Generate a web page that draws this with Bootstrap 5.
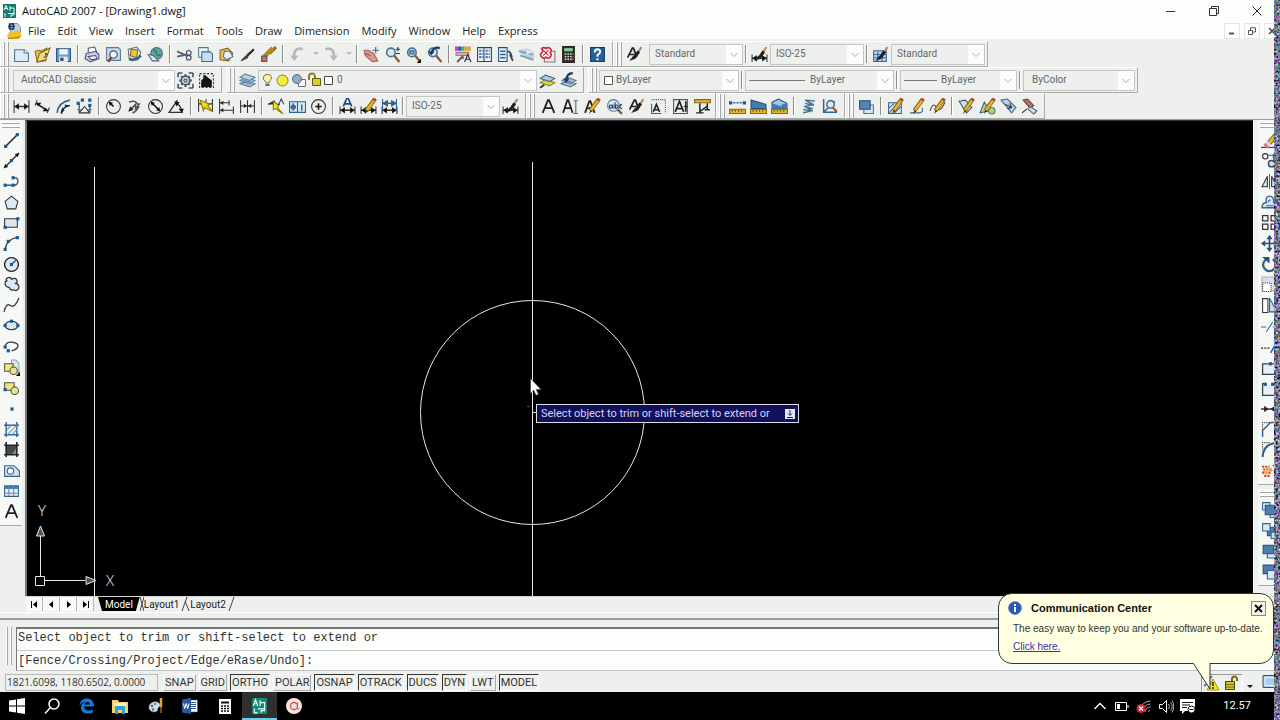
<!DOCTYPE html>
<html lang="en">
<head>
<meta charset="utf-8">
<meta name="viewport" content="width=device-width, initial-scale=1">
<title>AutoCAD 2007 - [Drawing1.dwg]</title>
<link href="https://cdn.jsdelivr.net/npm/bootstrap@5.3.0/dist/css/bootstrap.min.css" rel="stylesheet">
<style>
:root{--face:#eef0ee;--edge:#a9aba9;--ui:"Open Sans","Noto Sans",sans-serif;--small:Roboto,"Liberation Sans",sans-serif}
body{font-family:var(--ui);font-size:11px;line-height:14px;color:#222;background:var(--face);overflow:hidden}
button{padding:0;border:0;background:none;color:inherit;font:inherit;line-height:inherit}
svg{display:block;flex:none;fill:none;stroke-linecap:butt}
.titlebar{height:22px;background:#fcfefc;padding-left:3px}
.title-text{margin-left:6px;color:#111}
.win-btns{margin-right:2px}
.win-btn{width:43px;height:22px;display:flex;align-items:center;justify-content:center}
.menubar{height:17px;background:#fcfefc;padding-left:7px}
.menu-items{gap:12px;padding-left:6px}
.menubar a{color:#222;text-decoration:none}
.mdi button{width:16px;height:16px;background:#fff;border:1px solid #e4e6e4;display:flex;align-items:center;justify-content:center}
.bars{padding-top:2px;border-bottom:1px solid #9a9c9a}
.bar-row{height:26px}
.bar{display:flex;align-items:center;height:26px;border:1px solid;border-color:#fff var(--edge) var(--edge) #fff;padding-right:4px}
.bar-flush{padding-right:2px}
.grip{width:10px;height:24px;flex:none;background:linear-gradient(90deg,transparent 2px,#fff 2px 3px,#a5a7a5 3px 4px,transparent 4px 6px,#fff 6px 7px,#a5a7a5 7px 8px,transparent 8px)}
.tools{display:flex;align-items:center}
.tool{width:21px;height:22px;display:flex;align-items:center;justify-content:center;flex:none}
.tools-roomy .tool{width:22px}
.drop{width:12px;height:22px;display:flex;align-items:center;justify-content:flex-end}
.split{width:8px;height:18px;flex:none;background:linear-gradient(90deg,transparent 3px,#8c8e8c 3px 4px,#fff 4px 5px,transparent 5px)}
.split-thin{width:6px;height:18px;flex:none;background:linear-gradient(90deg,transparent 2px,#8c8e8c 2px 3px,#fff 3px 4px,transparent 4px)}
.combo{appearance:none;height:21px;border:1px solid #c4c6c4;border-radius:0;padding:0 20px 0 5px;font:10px/18px var(--small);color:#666!important;opacity:1;
 background:url("data:image/svg+xml,%3Csvg xmlns='http://www.w3.org/2000/svg' width='16' height='19'%3E%3Crect width='16' height='19' fill='%23fcfcfc'/%3E%3Cpath d='M4.500 8l3.500 3.500 3.500-3.500' fill='none' stroke='%23aaa'/%3E%3C/svg%3E") right center no-repeat #eef0ee}
.combo-wrap{position:relative;display:flex}
.combo-wrap svg{position:absolute;left:4px;top:2px;pointer-events:none}
.w-style{width:94px}.w-space{width:162px;margin-left:2px;padding-left:7px}.w-layer{width:279px;padding-left:78px}
.w-color{width:140px;padding-left:16px}.w-ltype{width:149px;padding-left:64px}.w-weight{width:117px;padding-left:40px}.w-plot{width:112px;padding-left:8px}
.workspace{min-height:0}
.side{width:25px;flex:none;background:var(--face);padding-right:3px}
.side-bar{background:#f6f8f6;border-bottom:1px solid var(--edge);padding-bottom:3px}
.side .tools{flex-direction:column}
.side .tool{flex:1 1 0;width:22px;min-height:0}
.grip-h{height:10px;margin:0 2px;background:linear-gradient(transparent 2px,#fff 2px 3px,#a5a7a5 3px 4px,transparent 4px 6px,#fff 6px 7px,#a5a7a5 7px 8px,transparent 8px)}
.draw-tools{height:392px}.modify-tools{height:351px}.order-tools{height:83px}
.right-side{width:27px;border-left:1px solid #fff;padding:0 0 0 4px}
.canvas{background:#000;border-left:2px solid #777;border-top:1px solid #333;position:relative;min-height:0}
.canvas>.scene{position:absolute;inset:0;width:100%;height:100%}
.prompt{position:absolute;left:509px;top:283px;width:263px;height:19px;background:#120f5c;border:1px solid #ddd;color:#d4d4f2;font:11px/16px var(--small);padding-left:4px;padding-right:3px}
.pointer{position:absolute;left:503px;top:257px}
.tabs{height:15px;margin-left:26px;line-height:13px;border-top:1px solid #d2d4d2}
.tab-nav{width:17px;height:14px;border-right:1px solid #b5b7b5;display:flex;align-items:center;justify-content:center;background:#f8faf8}
.layout-tab{font:10px/13px var(--small);color:#222}
.model-tab{background:#000;color:#fff;padding:0 7px;height:14px;clip-path:polygon(0 0,100% 0,calc(100% - 4px) 100%,4px 100%)}
.splitter{height:8px;border-top:1px solid #fff;border-bottom:2px solid #9a9c9a;margin-top:1px}
.command{padding:7px 0 1px 6px}
.command .grip{height:38px;width:10px;background-position:-2px 0}
.command-box{background:#fcfefc;border-top:2px solid #777;border-left:1px solid #777;border-bottom:1px solid #c0c2c0;font:12px/20px "Liberation Mono",monospace;color:#333}
.history{height:22px;border-bottom:1px solid #c8cac8;padding-left:1px;line-height:18px}
.command-input{border:0;outline:0;background:transparent;font:inherit;color:inherit;height:19px;padding:0 0 0 1px;width:100%;display:block}
.status{height:20px;padding:1px 0 0 5px;font:11px/15px var(--small);color:#333}
.coords{width:153px;height:17px;border:1px solid #b8bab8;font:10px/15px var(--ui);padding-left:1px;margin-right:5px}
.toggle{height:17px;padding:0 1px;border:1px solid;border-color:#fff #a9aba9 #a9aba9 #fff;margin-right:3px}
.toggle.active{border-color:#333 #fff #fff #333}
.tray-box{border:1px solid;border-color:#999 #fff #fff #999;height:18px;width:42px}
.clean-screen{margin-left:8px}
.taskbar{height:28px;background:#000;color:#fff}
.apps{width:311px}
.app{flex:1 1 0;height:28px;display:flex;align-items:center;justify-content:center}
.app-open{background:#30302f;box-shadow:inset 0 -2px #62d0ee}
.systray{padding-right:29px}
.systray button{width:22px;height:28px;display:flex;align-items:center;justify-content:center}
.systray time{margin-left:24px;font-family:var(--small)}
.balloon{position:absolute;right:6px;bottom:56px;width:276px;height:71px;background:#ffffe1;border:1px solid #333;border-radius:14px;padding:7px 7px 0 9px;color:#333;font:10px/15px "Liberation Sans",sans-serif}
.balloon h2{font:bold 11px/14px "Liberation Sans",sans-serif;color:#111;margin:0 0 0 9px}
.balloon p{margin:5px 0 3px 5px;white-space:nowrap;line-height:15px}
.balloon a{margin-left:5px;color:#3a2fc0}
.balloon .dismiss{width:15px;height:15px;border:1px solid #888;background:#f4f4ec}
.balloon-tail{position:absolute;left:193px;top:69px}
.edge-noise{position:absolute;right:0;top:0;width:6px;height:100%}
</style>
</head>
<body class="vh-100 d-flex flex-column position-relative">

<header>
 <div class="titlebar d-flex align-items-center">
  <svg width="13" height="14" viewBox="0 0 13 14"><path d="M0 0h13v14H0z" fill="#157a6e"/><path d="M1 6L3 1.500 5 6M2 4.500h2M7 2v5M5 9.500h6M7 4h4v7h-3v2M2 9v4" stroke="#e9fffa"/></svg>
  <span class="title-text">AutoCAD 2007 - [Drawing1.dwg]</span>
  <div class="win-btns ms-auto d-flex">
   <button class="win-btn" aria-label="Minimize"><svg width="10" height="10"><path d="M0 5.500h9" stroke="#333"/></svg></button>
   <button class="win-btn" aria-label="Restore"><svg width="10" height="10"><path d="M.5 2.500h7v7h-7zM2.500 2.500v-2h7v7h-2" stroke="#333"/></svg></button>
   <button class="win-btn" aria-label="Close"><svg width="10" height="10"><path d="M.5.5l9 9M9.500.5l-9 9" stroke="#222"/></svg></button>
  </div>
 </div>
 <nav class="menubar d-flex align-items-center" aria-label="Menu">
  <svg width="15" height="16" viewBox="0 0 15 16"><path d="M3.500.5h7l3 4v9h-10z" fill="#b9d4ee" stroke="#7d95b5"/><path d="M0 13l3-5q5 2 7-1l4 2v5l-2 2H1z" fill="#efbf2f"/><path d="M1 15.500l11-1 2-2" stroke="#a77a12"/><path d="M2.500 1h4v5h-4zM1 3.500h7" stroke="#1b3560" stroke-width="1.500"/></svg>
  <div class="menu-items d-flex">
   <a href="#">File</a><a href="#">Edit</a><a href="#">View</a><a href="#">Insert</a><a href="#">Format</a><a href="#">Tools</a><a href="#">Draw</a><a href="#">Dimension</a><a href="#">Modify</a><a href="#">Window</a><a href="#">Help</a><a href="#">Express</a>
  </div>
  <div class="mdi d-flex gap-1 ms-auto">
   <button aria-label="Minimize drawing"><svg width="8" height="8"><path d="M1 6.500h5" stroke="#556" stroke-width="2"/></svg></button>
   <button aria-label="Restore drawing"><svg width="8" height="8"><path d="M.5 3.500h4v4h-4zM2.500 3V.8h5V5H5" stroke="#556"/></svg></button>
   <button aria-label="Close drawing"><svg width="8" height="8"><path d="M1 1l6 6M7 1L1 7" stroke="#456" stroke-width="1.600"/></svg></button>
  </div>
 </nav>
</header>

<section class="bars" aria-label="Toolbars">
 <div class="bar-row d-flex">
  <div class="bar"><span class="grip"></span><div class="tools" data-tools="new open save | print preview publish dwf | cut copy paste match block | undo v redo v | pan zoomrt zoomwin zoomprev | props design palettes sheets markup calc | help"></div></div>
  <div class="bar bar-flush"><span class="grip"></span>
   <div class="tools" data-tools="textstyle"></div><select class="combo w-style ms-1" disabled aria-label="Text style"><option>Standard</option></select><span class="split-thin"></span>
   <div class="tools" data-tools="dimstyle"></div><select class="combo w-style" disabled aria-label="Dimension style"><option>ISO-25</option></select><span class="split-thin"></span>
   <div class="tools" data-tools="tablestyle"></div><select class="combo w-style" disabled aria-label="Table style"><option>Standard</option></select></div>
 </div>
 <div class="bar-row d-flex gap-1">
  <div class="bar"><span class="grip"></span><select class="combo w-space" disabled aria-label="Workspace"><option>AutoCAD Classic</option></select><div class="tools" data-tools="gear myspace"></div></div>
  <div class="bar"><span class="grip"></span><div class="tools" data-tools="layers"></div>
   <div class="combo-wrap"><select class="combo w-layer" disabled aria-label="Layer"><option>0</option></select>
    <svg width="74" height="17" viewBox="0 0 74 17"><path d="M5 2.500a3.500 3.500 0 0 1 2.500 6.500L7 11H4L3 9A3.500 3.500 0 0 1 5 2.500z" fill="#fbf39a" stroke="#776"/><path d="M3.500 13h4" stroke="#667" stroke-width="2"/><circle cx="20.500" cy="8.500" r="5.500" fill="#f4ec38" stroke="#776"/><path d="M36.500 7.500h7v7h-7z" fill="#fff" stroke="#678"/><circle cx="35" cy="7" r="4.500" fill="#8eabc7" stroke="#567"/><path d="M47 8V4.500a3 3 0 0 1 6 0V6" stroke="#8b8022" stroke-width="2"/><path d="M50.500 6.500h8v7h-8z" fill="#d9ce2c" stroke="#665c10"/><path d="M62.500 4.500h8v8h-8z" fill="#fff" stroke="#444"/></svg></div>
   <div class="tools" data-tools="makecur layprev"></div></div>
  <div class="bar bar-flush"><span class="grip"></span>
   <div class="combo-wrap"><select class="combo w-color" disabled aria-label="Color"><option>ByLayer</option></select><svg width="10" height="17"><path d="M1.500 4.500h8v8h-8z" fill="#fff" stroke="#555"/></svg></div><span class="split-thin"></span>
   <div class="combo-wrap"><select class="combo w-ltype" disabled aria-label="Linetype"><option>ByLayer</option></select><svg width="56" height="17"><path d="M0 8.500h56" stroke="#777"/></svg></div><span class="split-thin"></span>
   <div class="combo-wrap"><select class="combo w-weight" disabled aria-label="Lineweight"><option>ByLayer</option></select><svg width="33" height="17"><path d="M0 8.500h33" stroke="#777"/></svg></div><span class="split-thin"></span>
   <select class="combo w-plot" disabled aria-label="Plot style"><option>ByColor</option></select></div>
 </div>
 <div class="bar-row d-flex">
  <div class="bar"><span class="grip"></span><div class="tools" data-tools="dlin dali darc dord | drad djog ddia dang | qdim dbase dcont | qlead tol cmark | dedit dtedit dupd"></div><span class="split-thin"></span><select class="combo w-style" disabled aria-label="Current dimension style"><option>ISO-25</option></select><div class="tools" data-tools="dimstyle"></div></div>
  <div class="bar bar-flush"><span class="grip"></span><div class="tools tools-roomy" data-tools="mtext dtext edtext find textstyle scaletext justify space"></div></div>
  <div class="bar"><span class="grip"></span><div class="tools" data-tools="dist area region | list locate"></div></div>
  <div class="bar"><span class="grip"></span><div class="tools" data-tools="order | edhatch edpline edspline | edattr refedit tagsync tagout"></div></div>
 </div>
</section>

<main class="workspace d-flex flex-fill">
 <aside class="side" aria-label="Draw"><div class="side-bar"><div class="grip-h"></div><div class="tools draw-tools" data-tools="line xline pline polygon rect arc circle cloud spline ellipse ellarc insert makeblock point hatch gradient reg table bigA"></div></div></aside>
 <section class="canvas flex-fill" aria-label="Drawing area">
  <svg class="scene">
   <g stroke="#e6e6e6"><path d="M67.500 46v900M505.500 41v900"/><circle cx="505.500" cy="291.500" r="112"/>
   <path d="M505 291.500h5M13.500 412v43M18 459.500h40M8.500 455.500h9v9h-9z"/><path d="M13.500 405l-4 10h8zM69 459.500l-10-4v8z" fill="#555"/></g>
   <path d="M500 285l3 1" stroke="#555"/>
   <g fill="#eee" font-family="Open Sans,sans-serif" font-size="15" font-weight="300"><text x="11" y="395">Y</text><text x="79" y="465">X</text></g>
  </svg>
  <svg class="pointer" width="12" height="18" viewBox="0 0 12 18"><path d="M.5.5v15l3.200-3.200 2.300 5 2.500-1-2.300-4.800H11z" fill="#fff" stroke="#333" stroke-width=".5"/></svg>
  <div class="prompt d-flex align-items-center justify-content-between"><span>Select object to trim or shift-select to extend or</span><svg width="10" height="10"><path d="M0 0h10v10H0z" fill="#e4e8ff"/><path d="M5 1v5M3 4.500l2 2 2-2M2 8.500h6" stroke="#223"/></svg></div>
 </section>
 <aside class="side right-side" aria-label="Modify"><div class="side-bar"><div class="grip-h"></div><div class="tools modify-tools" data-tools="erase mcopy mirror offset array move rotate scale stretch trim extend breakpt break join chamfer fillet explode"></div></div>
  <div class="side-bar"><div class="grip-h mt-1"></div><div class="tools order-tools" data-tools="front back above under"></div></div></aside>
</main>

<div class="tabs d-flex">
 <button class="tab-nav" aria-label="First tab"><svg width="9" height="9"><path d="M1.500 1v7" stroke="#000"/><path d="M7 1v7L3 4.500z" fill="#000"/></svg></button>
 <button class="tab-nav" aria-label="Previous tab"><svg width="9" height="9"><path d="M6 1v7L2 4.500z" fill="#000"/></svg></button>
 <button class="tab-nav" aria-label="Next tab"><svg width="9" height="9"><path d="M3 1v7l4-3.500z" fill="#000"/></svg></button>
 <button class="tab-nav" aria-label="Last tab"><svg width="9" height="9"><path d="M7.500 1v7" stroke="#000"/><path d="M2 1v7l4-3.500z" fill="#000"/></svg></button>
 <button class="layout-tab model-tab ms-1">Model</button>
 <svg width="4" height="14"><path d="M0 0l4 14M4 0L0 14" stroke="#444"/></svg>
 <button class="layout-tab">Layout1</button>
 <svg width="11" height="14"><path d="M8 0L3 14M6 4l4 10" stroke="#444"/></svg>
 <button class="layout-tab">Layout2</button>
 <svg width="10" height="14"><path d="M8 0L3 14" stroke="#444"/></svg>
</div>
<div class="splitter"></div>

<section class="command d-flex" aria-label="Command line">
 <span class="grip"></span>
 <div class="command-box flex-fill"><div class="history">Select object to trim or shift-select to extend or</div>
 <input class="command-input" aria-label="Command" value="[Fence/Crossing/Project/Edge/eRase/Undo]:"></div>
</section>

<footer>
 <div class="status d-flex align-items-center">
  <output class="coords">1821.6098, 1180.6502, 0.0000</output>
  <button class="toggle">SNAP</button><button class="toggle">GRID</button><button class="toggle active">ORTHO</button><button class="toggle">POLAR</button><button class="toggle active">OSNAP</button><button class="toggle active">OTRACK</button><button class="toggle active">DUCS</button><button class="toggle active">DYN</button><button class="toggle">LWT</button><button class="toggle active">MODEL</button>
  <div class="d-flex align-items-center ms-auto">
   <div class="tray-box d-flex align-items-center">
    <button aria-label="Communication Center"><svg width="18" height="16"><path d="M3 2l6 7M10 1L6 6M2 11l5-4" stroke="#678" stroke-width="2"/><path d="M11 4l6 11H5z" fill="#f4e72b" stroke="#a90"/><path d="M11 7v4M11 12v2" stroke="#222" stroke-width="1.500"/></svg></button>
    <button class="ms-1" aria-label="Toolbars locked"><svg width="16" height="16"><path d="M8 8V4a2.500 2.500 0 0 1 5 0v2" stroke="#7a6c10" stroke-width="2"/><path d="M1.500 6.500h9v8h-9z" fill="#d8c61e" stroke="#4f450a"/><path d="M2 9.500h8M2 12h8" stroke="#796c12"/></svg></button></div>
   <button class="ms-1" aria-label="Status menu"><svg width="7" height="14"><path d="M0 9h6l-3 3z" fill="#111"/></svg></button>
   <button class="clean-screen" aria-label="Clean screen"><svg width="18" height="17"><path d="M1 1.500h20v12H1z" fill="#a9cdec" stroke="#356"/><path d="M3 3.500h18v8H3z" stroke="#e8f5ff"/></svg></button>
  </div>
 </div>
 <div class="taskbar d-flex align-items-center justify-content-between">
  <div class="apps d-flex">
   <button class="app" aria-label="Start"><svg width="16" height="16"><path d="M0 2.500l7-1v6H0zM8 1.300L16 0v7.500H8zM0 8.500h7v6l-7-1zM8 8.500h8V16l-8-1.300z" fill="#fff"/></svg></button>
   <button class="app" aria-label="Search"><svg width="16" height="16"><circle cx="10" cy="6" r="5" stroke="#fff" stroke-width="1.500"/><path d="M6.500 9.500L1 15.500" stroke="#fff" stroke-width="1.500"/></svg></button>
   <button class="app" aria-label="Edge"><svg width="15" height="16" viewBox="0 0 15 16"><path d="M.5 7.500C1 3 4 .5 8 .5c4.500 0 7 3.200 7 8H5c.2 2.600 2.300 4 4.800 4 1.700 0 3-.4 4-1v3c-1.300.8-3 1.200-4.800 1.200-4 0-7-2.200-7-6.200C2 7 3.300 5 5.500 4 3.300 4.300 1.500 5.500.5 7.500zM5.200 6.500h5.500C10.700 4.800 9.700 4 8.200 4s-2.700 1-3 2.500z" fill="#0f7ad8"/></svg></button>
   <button class="app" aria-label="File Explorer"><svg width="17" height="15"><path d="M0 1h6l1 2h9v11H0z" fill="#f5d267"/><path d="M2 4h12v3H2z" fill="#fff3bd"/><path d="M3 7h10v8h-3v-4H6v4H3z" fill="#2aa6dc"/></svg></button>
   <button class="app" aria-label="Paint"><svg width="16" height="16"><path d="M1 8c1-3 5-5 8-4s4 4 2 5-1 3-2 4c-2 2-9 1-8-5z" fill="#cfe0ea" stroke="#789" stroke-width=".5"/><circle cx="4" cy="8" r="1.300" fill="#d33"/><circle cx="7" cy="6" r="1.300" fill="#3a8"/><circle cx="5" cy="11.500" r="1.300" fill="#28c"/><path d="M13 0v9" stroke="#e8a23a" stroke-width="2.500"/><path d="M13 9v6" stroke="#a55d24" stroke-width="1.500"/></svg></button>
   <button class="app" aria-label="Word"><svg width="16" height="16"><path d="M8 2h7.500v12H8z" fill="#fff" stroke="#2b579a" stroke-width=".6"/><path d="M9 4.500h5M9 6.500h5M9 8.500h5M9 10.500h5" stroke="#2b579a"/><path d="M0 1.500L9 0v16l-9-1.500z" fill="#2b579a"/><path d="M1.500 5.500l1.200 5 1.500-5 1.500 5 1.300-5" stroke="#fff"/></svg></button>
   <button class="app" aria-label="Calculator"><svg width="12" height="15"><path d="M0 0h12v15H0z" fill="#fff"/><path d="M2 3.500h8" stroke="#111" stroke-width="2"/><path d="M2 7h8M2 9.500h8M2 12h8" stroke="#111" stroke-width="1.500" stroke-dasharray="2 1"/></svg></button>
   <button class="app app-open" aria-label="AutoCAD 2007"><svg width="15" height="16" viewBox="0 0 13 14"><path d="M0 0h13v14H0z" fill="#168a7a"/><path d="M1 7l2-5.500L5 7M2 5h2M7 2v5M5 9.500h6M7 4h4v7H8v2M2 9v4h3" stroke="#e9fffa"/></svg></button>
   <button class="app" aria-label="Recorder"><svg width="16" height="16"><circle cx="8" cy="8" r="8" fill="#f5e4e0"/><circle cx="8" cy="8" r="3.500" stroke="#d4574e" stroke-width="1.300"/><path d="M11.500 4.500v6c0 1.500 1.500 1 2 0" stroke="#d4574e"/></svg></button>
  </div>
  <div class="systray d-flex align-items-center">
   <button aria-label="Show hidden icons"><svg width="12" height="8"><path d="M.5 7L6 1.500 11.500 7" stroke="#fff" stroke-width="1.300"/></svg></button>
   <button aria-label="Battery"><svg width="14" height="9"><path d="M.5.5h11v8H.5zM13 3v3" stroke="#fff"/><path d="M2 2h3v5H2z" fill="#fff"/></svg></button>
   <button aria-label="Network"><svg width="16" height="14"><path d="M14.500 2A12 12 0 0 0 3 13M14.500 5A9 9 0 0 0 6 13M14.500 8A6 6 0 0 0 9 13M14 11l-2 2" stroke="#aaa"/><circle cx="5" cy="9.500" r="4.500" fill="#d5272f"/><path d="M3 7.500l4 4M7 7.500l-4 4" stroke="#fff" stroke-width="1.300"/></svg></button>
   <button aria-label="Volume"><svg width="15" height="13"><path d="M.5 4.500h3l4-4v12l-4-4h-3z" stroke="#fff"/><path d="M9.500 4q2 2.500 0 5M11.500 2.500q3.500 4 0 8M13 .5q3.500 6 0 12" stroke="#bbb"/></svg></button>
   <button aria-label="Notifications"><svg width="16" height="15"><path d="M0 0h15v12H5l-3 3v-3H0z" fill="#fff"/><path d="M2 3.500h11M2 6h8M2 8.500h5" stroke="#111"/><circle cx="11.500" cy="10.500" r="3.500" fill="#fff" stroke="#111"/><path d="M9.500 10.500h4" stroke="#111"/></svg></button>
   <time>12.57</time>
  </div>
 </div>
</footer>

<aside class="balloon" role="status">
 <svg class="balloon-tail" width="20" height="28"><path d="M1 0l17 26V0" fill="#ffffe1" stroke="#333"/><path d="M2 0h15" stroke="#ffffe1" stroke-width="2"/></svg>
 <div class="d-flex align-items-start"><svg width="14" height="14"><circle cx="7" cy="7" r="6.500" fill="#2457b8" stroke="#7c95c7"/><path d="M7 3v2M7 6v5" stroke="#fff" stroke-width="2"/></svg><h2>Communication Center</h2>
 <button class="dismiss ms-auto" aria-label="Close notification"><svg width="13" height="13"><path d="M3 3l7 7M10 3l-7 7" stroke="#111" stroke-width="2"/></svg></button></div>
 <p>The easy way to keep you and your software up-to-date.</p>
 <a href="#">Click here.</a>
</aside>
<svg class="edge-noise" aria-hidden="true"><filter id="grain" x="0" y="0" width="100%" height="100%" color-interpolation-filters="sRGB"><feTurbulence type="fractalNoise" baseFrequency=".45" numOctaves="2" seed="4"/><feColorMatrix values="1.400 .4 .4 0 -.65 .4 1.400 .4 0 -.65 .4 .4 1.500 0 -.6 0 0 0 0 1"/></filter><rect width="100%" height="100%" filter="url(#grain)"/></svg>

<script>
const K='#333',B='#2f6296',Y='#e3b82f';
const p=(d,s=K,f='none',w=1)=>`<path d="${d}" stroke="${s}" fill="${f}" stroke-width="${w}"/>`;
const c=(x,y,r,s=K,f='none',w=1)=>`<circle cx="${x}" cy="${y}" r="${r}" stroke="${s}" fill="${f}" stroke-width="${w}"/>`;
const dots=(...a)=>a.map(([x,y])=>p(`M${x-1.5} ${y-1.5}h3v3h-3z`,'none','#1c5a94')).join('');
const pencil=p('M14 1L6 12','#8a6410','none',4)+p('M13.500 2L6.500 11.500',Y,'none',2.2)+p('M14.500 .5l-1.500 2','#b5463b','none',3)+p('M6.500 11l-2 4 3-2.500z','none','#222');
const brush=p('M14.500 1L10 8','#b98a5a','none',2)+p('M12 5L8 11','#222','none',3)+p('M7 9l-4 5 6-2z','none','#222');
const lens=c(6.5,6,4,'#4d7190','#d5e8f4',1.5)+p('M9.500 9l5 6','#8a5b35','none',2.2);
const letter=p('M2.500 14L7.500 2h1L13.500 14M4.500 9.500h7','#222','none',1.7);
const arrows=p('M1 11.500h14',K,'none',1.5)+p('M1 8v7M15 8v7')+p('M1.500 11.500l4-3v6zM14.500 11.500l-4-3v6z','none','#111');
const ruler=p('M.5 10.500h15v4H.5z','#8a6615',Y)+p('M3 11v2M6 11v2M9 11v2M12 11v2','#6d500b');
const sq=(x,y,s,f)=>p(`M${x} ${y}h${s}v${s}h-${s}z`,B,f);
const ICONS={
new:p('M1.500 3.500h9l4 3v8h-13z','#4a7492','#d9ecf8')+p('M10.500 3.500v3h4','#4a7492','#fff'),
open:p('M1 5l4-1 2 1 5-3-1 12-8 1z','#8d6c1c','#e8c552')+p('M5 7l10-5-4 11-8 2z','#7f641d','#f3dc7d')+p('M9 11q3-1 2-4l2 1','#345'),
save:p('M1.500 2.500h13v12h-13z','#274f77','#6f9cc8')+p('M4 3h8v5H4z','none','#eef6fc')+p('M4 10h8v5H4z','none','#e4ecf2')+p('M5 11h3v3H5z','none','#345'),
print:p('M4 6V2l6-1 2 5','#556','#fff')+p('M2 7l9-2 3 3v4l-8 3-5-3z','#50517c','#c9cbe4')+p('M4 10l7-1 1 3-5 1z','#50517c','#fff'),
preview:p('M1.500 1.500h11l2 2v10h-13z','#5b7990','#c3dbec')+c(8,8,3.5,'#556','#e9f4fb',1.2)+p('M6 10.500L3 15','#7a3d2b','none',2),
publish:p('M2 3l8-2 4 5-3 7-8-1z','#5f7183','#dfe7ee')+p('M5 3l6 1-1 7-6-2z','#8a6c15','#efc93c')+p('M3 12q5 3 11-3','#38648e','none',2.5),
dwf:c(9,7,5.5,'#567','#5aa3c6')+p('M6 4q3 0 3 3t4 1','#3e8b3b','#8cc85a',2)+p('M1 8l5 1 5 5H5z','#5b6477','#dfe2ea'),
cut:p('M1 5l9 4M1 10l9-2','#59636f','none',1.7)+c(12,6.5,2.2,'#3b4a66')+c(12,11,2.2,'#3b4a66'),
copy:p('M1.500 1.500h9v9h-9z','#597b93','#eaf4fb')+p('M4.500 5.500h8l2 2v7h-10z','#41698a','#c4dff2'),
paste:p('M2 4l7-2 5 5-4 7-8-1z','#856316','#eac45a')+p('M6 5h5l3 5-6 3-3-3z','#59708a','#e9f3fa'),
match:p('M14 3L8 9','#222','none',2)+p('M9 7l-7 7 6-3z','#46332b','#6c4a3c'),
block:p('M15 1L9 7','#8b6a13',Y,3)+p('M12 2l-8 8','#b38a1d','none',4)+sq(1.5,9.5,5,'#e0673f'),
undo:p('M13 3C7 1 4 5 5 11','#b8bab8','none',2.6)+p('M1 9h8l-4 5z','none','#b8bab8'),
redo:p('M3 3c6-2 9 2 8 8','#b8bab8','none',2.6)+p('M7 9h8l-4 5z','none','#b8bab8'),
pan:p('M1 4l4 0 5 3 4 7-5 1-7-6z','#a8615b','#d39a93')+p('M12 1v6M9 4h6','#34618f')+p('M2 7l5 2','#8a4d48'),
zoomrt:lens+p('M11 3h4M13 1v4M11 7h4','#235'),
zoomwin:lens+p('M4.500 4.500h4v3h-4z',B,'#7aa5cc')+p('M15 12v4h-4z','none','#111'),
zoomprev:lens+p('M13 2Q7 0 5 7','#1a3c66','none',2)+p('M2 5h6l-3 4z','none','#1a3c66'),
props:p('M0 2.500h3','#d13fc1','none',4)+p('M3 2.500h3','#3747d0','none',4)+p('M6 2.500h3','#37b649','none',4)+p('M9 2.500h6','#e8a332','none',4)+p('M1 6h12v3H1z','#a78','#d9aaa2')+p('M2 15l5-5 1 2','#667','none',2)+p('M9 15l3-7 3 7M10 12.500h4','#223'),
design:p('M1.500 1.500h13v13h-13z','#23456c','#f2f6fa')+p('M7.500 2v12','#23456c')+`<path d="M3 4.500h4M3 7.500h4M3 10.500h4M9 4.500h4M9 7.500h4M9 10.500h4" stroke="#47719b" stroke-width="2" stroke-dasharray="2 1"/>`,
palettes:p('M1.500 1.500h8v13h-8z','#274e7a','#e4eff8')+p('M3 5h5M3 8h5M3 11h5','#2f6296','none',1.5)+p('M10 5q4 0 4 8M12 8l3 6','#445','none',1.6),
sheets:p('M0 4l9-2 6 4v8l-9-3z','none','#b9d4e0')+p('M1 5l13 3M2 9l12 4','#7698aa','none',1.5)+p('M8 3l6 3-6 2z','none','#dfeef5'),
markup:p('M5 5h10v10H5z','#8a6b78','#eee')+p('M2.500 2.500q2-2 4 0 2-2 4 0t0 4q2 2 0 4t-4 0q-2 2-4 0-2-2 0-4t0-4z','#d0283e','#fff',1.5)+p('M4 4l5 5M9 4L4 9','#d0283e'),
calc:p('M2.500.5h11v15h-11z','#261f1b','#372d27')+p('M4 2h8v3H4z','none','#7fcf9c')+`<path d="M4.500 7.500h8M4.500 10h8M4.500 12.500h8" stroke="#e0d8cf" stroke-width="1.400" stroke-dasharray="1.500 1"/>`,
help:p('M1.500 1.500h13v13h-13z','#123c66','#25639b')+p('M5.500 6q0-3 2.500-3t2.500 2.500q0 1.500-2.500 3v1.500M8 11.500v2','#fff','none',1.8),
textstyle:p('M1.500 11L6 2h1l3 8M3 8h5','#222','none',1.6)+brush,
dimstyle:arrows+brush,
tablestyle:p('M1.500 4.500h12v10h-12z','#3a68a5','#b9d3ee')+p('M2 8h11M2 11h11M5.500 5v9M9.500 5v9','#3a68a5')+brush,
gear:p('M1 1h4M11 1h4M1 15h4M11 15h4M1 1v4M15 1v4M1 11v4M15 11v4','#456','none',1.5)+p('M8 2v12M2 8h12M4 4l8 8M12 4l-8 8','#456','none',2)+c(8,8,4,'#456','#dde6ee',1.6)+c(8,8,1.5,'#345'),
myspace:`<path d="M1.500 1.500h13v13h-13z" stroke="#333" stroke-dasharray="2 1.500" fill="#e7e9e7"/>`+p('M3 14V8l2-2V3h2l2 2 4 3v6z','none','#151515'),
layers:p('M1 11l5-3 9 3-5 3zM1 8l5-3 9 3-5 3z','#60809b','#9fbdd6')+p('M1 5l5-3 9 3-5 3z','#60809b','#bdd3e5'),
makecur:p('M1 10l5-3 9 3-5 3z','#8b8b2a','#e6d544')+p('M1 6l5-3 9 3-5 3z','#466b8b','#b2cde0')+p('M1 15l4-3','#222','none',1.5),
layprev:p('M1 11l5-3 9 3-5 3zM2 8l5-3 8 3-5 3z','#5a7690','#a7c0d5')+p('M12 1Q6 1 6 8','#15375e','none',2)+p('M3 6h6l-3 4z','none','#15375e'),
dlin:p('M1 8h14',K,'none',1.4)+p('M1 2v12M15 2v12')+p('M1.500 8l4-3v6zM14.500 8l-4-3v6z','none','#111'),
dali:p('M2 5l11 7','#222','none',1.5)+p('M3 2L1 7M14.500 9l-2 5')+p('M2 4.500h5L4 8zM13 12.500H8L11 9z','none','#111'),
darc:p('M2 14Q3 4 14 2','#2d6696','none',1.5)+p('M6 15q1-7 8-8','#333','none',1.5)+p('M5 14l2-5 2 3zM14 7l-5-1 1 3z','none','#222'),
dord:p('M3 5v9h10V8M3 14l5-6 5 6')+dots([2,5],[6,2],[13,2],[13,7])+p('M1 11h4M11 11h4','#567'),
drad:c(8,8,6.5)+p('M4 4l4 4','#111','none',1.5)+p('M3.500 3.500l4 1-3 3z','none','#111'),
djog:p('M3 4q7-3 9 4-2 5-6 6M5 10l4-4v4l4-5','#555','none',1.5)+p('M2 13l2-5 3 3z','none','#222'),
ddia:c(8,8,6.5)+p('M4 4l8 8','#111','none',1.5)+p('M3.500 3.500l4 1-3 3zM12.500 12.500l-4-1 3-3z','none','#111'),
dang:p('M14 13.500H1L9 2M7 5q5 1 6 8',K,'none',1.3)+p('M6 3l5 1-3 4zM10 10h5l-2 4z','none','#111'),
qdim:p('M1 5.500h14M1.500 1v12M14.500 1v12M8.500 1v8')+p('M3 2l9 4-2 1 5 6-8-4-1 3z','#8a7a00','#f0dc20'),
dbase:p('M1.500 1v14M2 4.500h8M2 11.500h12M10.500 2v5M14.500 8v7')+p('M2 4.500l3-2v4zM2 11.500l3-2v4z','none','#222'),
dcont:p('M1.500 2v12M8 2v12M14.500 2v12M2 7.500h12')+p('M7.500 7.500l-3-2v4zM8.500 7.500l3-2v4z','none','#222'),
qlead:p('M0 6l6-3v3h5','#222','#222')+p('M5 3l5 4-1 2 5 6-7-5-2 1z','#8a7a00','#f0dc20')+p('M10 6l2.500-5L15 6','#236'),
tol:p('M.5 3.500h15v10H.5zM8 4v9',B,'#d8e9f6')+c(4,8.5,2,B)+p('M4 5v7M1.500 8.500h5M12 6v6',B,'none',1.3),
cmark:c(8,8,6.5)+p('M8 5v6M5 8h6','#111','none',1.5),
dedit:arrows+p('M4 8L7.500 0h1L12 8M5.500 5.500h5','#1b4b80','none',1.6),
dtedit:arrows+pencil,
dupd:arrows+p('M1 5h14','#2f6296','none',1.5)+p('M1.500 1v12M14.500 1v12M2 5l4-2.500v5zM14 5l-4-2.500v5z',B,B),
mtext:letter,bigA:letter,
dtext:p('M1 14L5 2h1l4 12M3 9.500h5','#222','none',1.6)+p('M11 2.500h4M11 14.500h4M13 3v11','#567'),
edtext:p('M1 14L5 3h1l4 11M3 9.500h5','#222','none',1.6)+pencil,
find:c(7,7,5.5,'#5a7ba5','#dbe8f5')+p('M11 11l4 4','#8a5b35','none',2.2)+c(4.5,8,1.5,'#234')+p('M6.500 6v4M8.500 4v6','#234')+c(10,8,1.5,'#234')+p('M15 6q-2 0-2 2t2 2','#234'),
scaletext:`<path d="M1.500 1.500h13v13" stroke="#555" stroke-dasharray="1 1"/>`+p('M1.500 5.500v9h9','#38618a')+p('M3 13L6 6l3 7M4 11h4','#222','none',1.5),
justify:p('M1.500 1.500h13v13h-13z','#38618a')+p('M3 13L7 3l4 10M4.500 10h5M13 3v10','#222','none',1.6)+p('M11 8h4','#222'),
space:p('M.5 1.500h15v3H.5z','#8a6615',Y)+p('M5.500 5v9M12.500 5v6M5 13l7-5M2 14h7M10 11h5','#222','none',1.4),
dist:`<path d="M1 4.500h14" stroke="#2d6fa5" stroke-width="1.500" stroke-dasharray="2 1"/>`+p('M0 3h3v3H0zM13 3h3v3h-3z','none','#1c5a94')+ruler,
area:p('M1 2l14 4v4H1z','#1f4e79','#3f7db4')+ruler,
region:p('M1 4l6-3 8 4v5H1z','#1f4e79','#9cc5e6')+p('M1 5l9 3V6l5-1v5H1z','none','#3f7db4')+ruler,
list:p('M5 1h9l-2 13H2z','none','#d8e6ef')+p('M5 2l9 1M5 5l8 2M4 8l8 2M3 11l9 1M5 2l7 4-7 2 6 4-8 2','#466f90','none',1.3),
locate:p('M2.500 1v12.500H15M3 13L13 3','#2d6696','none',1.4)+c(9,6,3.5,'#4d7190','#d5e8f4',1.5)+p('M11 9l4 4','#8a5b35','none',2),
order:p('M5.500 6.500h9v8h-9z','#4c7396','#d6e8f5')+p('M1.500 2.500h10v8h-10z','#24527f','#5585b3'),
edhatch:p('M1.500 4.500h12v10h-12z','#38618a','#d8e9f6')+p('M2 9l5-4M2 14l9-9M7 14l6-6','#38618a')+pencil,
edpline:p('M2 14h9q4-1 2-5','#38618a')+pencil,
edspline:p('M1 12q3-9 6-3t8-5','#444')+pencil,
edattr:p('M1 3l6-1 6 7-5 5z','#456','#cfe1f1')+pencil,
refedit:p('M1 14l4-10 5 8z','#456','#b8d5a8')+c(12,12,3,'#4b7d3b','#a7d28a')+pencil,
tagsync:p('M1 2l6-1 8 8-4 5z','#45688b','#bdd5ea')+p('M5 6l6 3M9 5l2 4-4 1','#234'),
tagout:p('M2 2l4-1 6 6-3 3z','#7c3f3b','#b3716c')+p('M8 8l7 4-3 3-5-4z','#567','#d5e4f0')+p('M1 14l5-4','#222'),
line:p('M2 14L14 2','#333','none',1.4)+dots([2.5,13.5],[13.5,2.5]),
xline:p('M1 15L15 1','#333','none',1.4)+p('M1 15l1-4 3 3zM15 1l-4 1 3 3z','none','#111')+dots([8,8]),
pline:p('M1 11.500h8M9 4.500q5-1 5 3t-4 4','#456','none',1.3)+dots([2,11.5],[9.5,11.5],[9.5,4.5]),
polygon:p('M8 2l6 5-2 7H4L2 7z','#333','#dce9f2'),
rect:p('M1.500 4.500h12v8h-12z','#333','#dce9f2')+dots([2,12.5],[14,4.5]),
arc:p('M2 14Q3 4 14 2','#444','none',1.3)+dots([2,13.5],[5,6],[13.5,2.5]),
circle:c(8,8,6.5,'#222','#dce9f2',1.3)+p('M8 8l4-4',B,'none',1.5)+dots([8,8]),
cloud:p('M4 2q3-2 4 1 4-2 5 1 1 3-2 3 4 0 4 4-2 4-5 2-3 1-4-2-4-1-4-4t2-2q-2-2 0-3z','#333','#dce9f2',1.2),
spline:p('M1 14Q3 5 7 8t8-7','#444','none',1.3),
ellipse:`<ellipse cx="8" cy="8" rx="6" ry="4" stroke="#333" fill="#dce9f2"/>`+dots([2,8],[14,8],[8,4]),
ellarc:p('M2 8Q3 3 9 4t5 4-6 4','#444','none',1.3)+dots([2,8.5],[5,12]),
insert:p('M8 1h4l3 3v9H8z','#8aa','#d8e9f3')+p('M1.500 4.500h8v7h-8z','#553','#eee882')+c(10,11,3.5,'#553','#e6e29b')+p('M16 12v4h-4z','none','#111'),
makeblock:p('M1.500 3.500h9v7h-9z','#553','#eee882')+c(11,11,3.5,'#553','#e6e29b')+dots([2,10]),
point:dots([8.5,8.5]),
hatch:p('M3 1v14M13 1v14M1 4h14M1 13h14','#2f5f8f','none',1.3)+p('M4 8l4-4M4 13l9-9M8 13l5-5','#6e9cc4'),
gradient:p('M3 4h10v9H3z','none','#444b3f')+p('M8 13l5-7v7z','none','#8a8d72')+p('M3 1v14M13 1v14M1 4h14M1 13h14','#1c2733','none',1.5),
reg:p('M1.500 3.500h9l5 5v5h-14z','#38618a','#d3e4f1')+c(7,8.5,3,'#38618a','#fff'),
table:p('M1.500 3.500h13v10h-13z','#38618a','#e8f1fa')+p('M2 5h12','#3e76b8','none',3)+p('M2 10.500h12M5.500 4v9M10 4v9','#5d8bbd'),
erase:p('M0 14.500h16')+p('M15 2L7 11','#8a6410','none',5)+p('M15 2L7 11',Y,'none',3)+p('M6 12l-2 2','#d87975','none',5)+p('M8 10l-1.500 1.500','#c5d2de','none',5),
mcopy:c(4,4,2.5)+c(10,11,3,'#345','#d0e2ef',1.3)+c(14,4,2.5)+p('M6 3h6v5',B),
mirror:p('M6 3v10H1zM10 3v10h5z','#333','#d5e5f0')+p('M8 1v14',B),
offset:p('M1 13h14v-3q0-2-3-2 0-6-4-6T5 8q-4 0-4 5z','#38618a','#d5e8f5',1.3)+p('M5 11h7M7 8q0-3 2-2',B),
array:p('M1.500 1.500h5v5h-5zM9.500 1.500h5v5h-5zM1.500 9.500h5v5h-5zM9.500 9.500h5v5h-5z','#333','#fff',1.2),
move:p('M8 2v12M2 8h12','#24527f','none',1.6)+p('M8 0l3 4H5zM8 16l3-4H5zM0 8l4-3v6zM16 8l-4-3v6z','none','#24527f'),
rotate:p('M5 3a6 6 0 1 0 6 0','#37618a','none',2.2)+p('M1 1h7v6z','none','#24527f'),
scale:p('M1 1h14v13H1z','#aab','#d5e1ee')+`<path d="M1.500 6.500h8v8h-8z" stroke="#333" stroke-dasharray="1 1" fill="#fff"/>`,
stretch:p('M1.500 1.500h5v13h-5z','#333','#fff')+p('M8 1l7 13H8z','#38618a','#c6dbec'),
trim:p('M0 8.500h5M11 8.500h5M5 13l6-9',B),
extend:`<path d="M0 9.500h9" stroke="#333" stroke-dasharray="2 1"/>`+p('M9 14l6-10',B,'none',1.5),
breakpt:p('M1.500 4.500h13v10h-13z','#345','#e5eff7',1.2)+dots([9,4.5]),
break:p('M4 3.500H1.500v11h13v-11H12','#345','#e5eff7',1.2)+dots([4,4],[11,4]),
join:p('M0 8.500h16','#333','none',1.4)+p('M7 8.500L3 5.500v6zM9 8.500l4-3v6z','none','#222'),
chamfer:p('M1.500 15V9L9 1.500h6','#38618a','none',1.4)+`<path d="M1.500 8V1.500H8" stroke="#333" stroke-dasharray="1 1"/>`,
fillet:p('M1.500 15Q2 3 15 1.500','#38618a','none',2)+`<path d="M1.500 8V1.500H8" stroke="#333" stroke-dasharray="1 1"/>`,
explode:`<path d="M1 4.500h7M2 7h8M1 10h9M3 13h5" stroke="#c8442a" stroke-width="2" stroke-dasharray="2 1"/>`+p('M5 6l3 2M3 9l3 2M9 6l1 3','#f1a63b','none',2)+p('M11 4l4-3M12 8l3 1','#557'),
front:sq(1.5,1.5,7,'#e8f2fa')+sq(8.5,8.5,7,'#d0e4f4')+p('M4 4h9v9H4z','#24527f','#4e7eae'),
back:p('M6 5h8v8H6z','#24527f','#4e7eae')+sq(1.5,1.5,7,'#d8e9f6')+sq(9.5,9.5,6,'#d0e4f4'),
above:p('M6 7h9v8H6z',B,'#d6e8f5')+p('M2 3h10v8H2z','#24527f','#4e7eae'),
under:p('M2 2h10v8H2z','#24527f','#4e7eae')+p('M6 7h9v8H6z',B,'#d6e8f5')
};
document.querySelectorAll('[data-tools]').forEach(box=>{
 box.innerHTML=box.dataset.tools.split(' ').map(n=>n==='|'?'<span class="split"></span>':
  n==='v'?'<button class="drop" aria-label="History"><svg width="7" height="4"><path d="M0 0h6L3 3z" fill="#b8bab8"/></svg></button>':
  `<button class="tool" aria-label="${n}"><svg width="17" height="17" viewBox="0 0 16 16">${ICONS[n]}</svg></button>`).join('');
});
</script>
<script src="https://cdn.jsdelivr.net/npm/bootstrap@5.3.0/dist/js/bootstrap.bundle.min.js"></script>
</body>
</html>
